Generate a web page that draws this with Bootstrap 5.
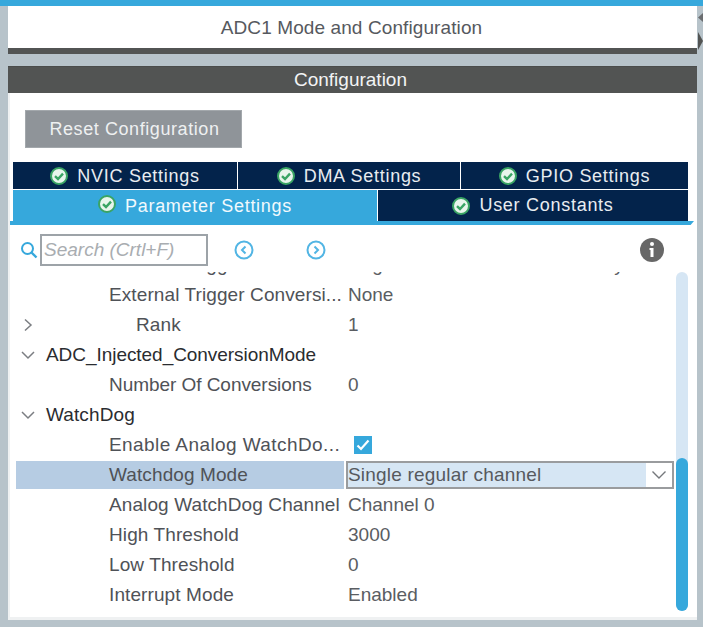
<!DOCTYPE html>
<html lang="en">
<head>
<meta charset="utf-8">
<title>ADC1 Mode and Configuration</title>
<link href="https://cdn.jsdelivr.net/npm/bootstrap@5.3.0/dist/css/bootstrap.min.css" rel="stylesheet">
<style>
html,body{height:100%}
body{background:#b7c3ca;font-family:"Liberation Sans",Arial,sans-serif;font-size:19px;color:#4f5257;overflow:hidden}
.top-strip{height:6px;background:#36a8dc}
.frame{margin-left:8px;width:695px}
.title-row{height:48px}
.title-panel{width:689px;background:#fff;border-bottom:6px solid #525453;color:#56595e;letter-spacing:.1px;padding-top:2px;padding-right:2px}
.handle{width:6px}
.conf-head{width:689px;height:27px;margin-top:12px;background:#525453;color:#f2f4f5;border-top:1px solid #4a4c4b;padding-right:4px}
.conf-body{width:689px;height:527px;background:#fff;border-left:2px solid #eff1f2;border-bottom:3px solid #eff1f2;padding-top:17px}
.reset-btn{width:217px;height:38px;margin-left:15px;background:#8f9499;border:1px solid #a3a8ac;border-radius:0;color:#eef0f1;font-size:18px;letter-spacing:.58px;padding:0 0 0 2px}
.reset-btn:hover{background:#8f9499;color:#eef0f1}
.tabs{margin-left:3px;margin-top:14px;width:675px;gap:1px}
.tab-line{gap:1px}
.tab-line:first-child .tab-item{height:27px;padding-top:1px}
.tab-line:last-child .tab-item{height:31px}
.tab-item{background:#03234b;color:#e9edf1;font-size:18px;letter-spacing:.72px;gap:9px;flex:1 1 0}
.tab-n{flex:0 0 224px}
.tab-d{flex:0 0 222px}
.tab-line .tab-item.is-on{background:#36a8dc;color:#f1f9fd;flex:0 0 364px;height:35px;padding-top:5px}
.tab-rule{height:4px;background:#36a8dc;width:684px;margin-top:-4px;clip-path:polygon(0 0,100% 0,99.5% 100%,0 100%)}
.tool-row{height:47px;padding-left:10px;padding-bottom:2px;padding-top:4px}
.find-box{width:168px;height:32px;border:2px solid #9da3a8;margin-left:2px;border-radius:0;padding:0 2px;font-size:19px;font-style:italic;color:#555;box-shadow:none}
.find-box::placeholder{color:#a9adb1;opacity:1}
.nav-a{margin-left:26px}
.nav-b{margin-left:52px}
.info-dot{margin-left:314px}
.tree-wrap{height:344px;position:relative}
.tree{width:658px;margin-left:6px;height:344px;overflow:hidden;justify-content:flex-end;padding-bottom:6px}
.tree-line{height:30px;flex:0 0 30px;align-items:center;white-space:nowrap}
.cell-a{width:328px;flex:0 0 328px;height:28px;display:flex;align-items:center;overflow:hidden;letter-spacing:.1px}
.cell-b{padding-left:4px;color:#5a5d62;flex:1;height:28px;display:flex;align-items:center}
.chev{width:24px;flex:0 0 24px;margin-right:6px;display:flex;justify-content:center}
.txt-leaf{padding-left:93px}
.txt-rank{padding-left:90px}
.txt-group{color:#2a2c30}
.txt-roomy{letter-spacing:.42px}
.txt-tight{letter-spacing:-.05px}
.is-sel{background:#b6cce3}
.drop{margin-left:2px;flex:1;height:28px;border:2px solid #9a9c9e;background:#fff;display:flex;padding:0;border-radius:0}
.drop-val{flex:1;background:#d6e6f4;padding-left:0;line-height:24px;color:#56595e;letter-spacing:.2px}
.drop-arrow{width:26px;display:flex;align-items:center;justify-content:center}
.tick{width:18px;height:18px;background:#36a8dc;margin-left:6px;display:flex;align-items:center;justify-content:center}
.sbar{position:absolute;left:666px;top:0;width:12px;height:339px;background:#d6e6f4;border-radius:6px}
.sthumb{position:absolute;left:0;bottom:0;width:12px;height:153px;background:#36a8dc;border-radius:6px}
</style>
</head>
<body>
<div class="top-strip"></div>
<div class="frame">
  <div class="d-flex title-row">
    <div class="title-panel d-flex align-items-center justify-content-center">ADC1 Mode and Configuration</div>
    <div class="handle">
      <svg width="6" height="48" viewBox="0 0 6 48"><path d="M6 7 1 11.5 6 16Z" fill="#6a6d70"/><path d="M1 26 6 35 1 44Z" fill="#525453"/></svg>
    </div>
  </div>
  <div class="conf-head d-flex align-items-center justify-content-center">Configuration</div>
  <div class="conf-body">
    <button type="button" class="btn reset-btn">Reset Configuration</button>
    <div class="tabs d-flex flex-column">
      <div class="tab-line d-flex">
        <div class="tab-item tab-n d-flex align-items-center justify-content-center"><svg width="18" height="18" viewBox="0 0 18 18"><circle cx="9" cy="9" r="8" fill="#e8f5ec" stroke="#3aa464" stroke-width="2"/><path d="M5 9.2 8 12l5-5.4" fill="none" stroke="#3aa464" stroke-width="2.4"/></svg><span>NVIC Settings</span></div>
        <div class="tab-item tab-d d-flex align-items-center justify-content-center"><svg width="18" height="18" viewBox="0 0 18 18"><circle cx="9" cy="9" r="8" fill="#e8f5ec" stroke="#3aa464" stroke-width="2"/><path d="M5 9.2 8 12l5-5.4" fill="none" stroke="#3aa464" stroke-width="2.4"/></svg><span>DMA Settings</span></div>
        <div class="tab-item d-flex align-items-center justify-content-center"><svg width="18" height="18" viewBox="0 0 18 18"><circle cx="9" cy="9" r="8" fill="#e8f5ec" stroke="#3aa464" stroke-width="2"/><path d="M5 9.2 8 12l5-5.4" fill="none" stroke="#3aa464" stroke-width="2.4"/></svg><span>GPIO Settings</span></div>
      </div>
      <div class="tab-line d-flex align-items-start">
        <div class="tab-item is-on d-flex justify-content-center align-items-start"><svg width="18" height="18" viewBox="0 0 18 18"><circle cx="9" cy="9" r="8" fill="#e8f5ec" stroke="#3aa464" stroke-width="2"/><path d="M5 9.2 8 12l5-5.4" fill="none" stroke="#3aa464" stroke-width="2.4"/></svg><span class="lh-sm">Parameter Settings</span></div>
        <div class="tab-item d-flex align-items-center justify-content-center"><svg width="18" height="18" viewBox="0 0 18 18"><circle cx="9" cy="9" r="8" fill="#e8f5ec" stroke="#3aa464" stroke-width="2"/><path d="M5 9.2 8 12l5-5.4" fill="none" stroke="#3aa464" stroke-width="2.4"/></svg><span>User Constants</span></div>
      </div>
    </div>
    <div class="tab-rule"></div>
    <div class="tool-row d-flex align-items-center">
      <svg width="18" height="18" viewBox="0 0 18 18" fill="none" stroke="#36a8dc"><circle cx="7.5" cy="7.5" r="5.5" stroke-width="2"/><path d="M11.5 11.5 16.5 16.5" stroke-width="2.4"/></svg>
      <input class="form-control find-box" type="text" placeholder="Search (Crtl+F)" aria-label="Search">
      <svg class="nav-a" width="20" height="20" viewBox="0 0 20 20" fill="none" stroke="#52b5e4" stroke-width="2"><circle cx="10" cy="10" r="8.5"/><path d="M11.5 6.5 8 10l3.5 3.5"/></svg>
      <svg class="nav-b" width="20" height="20" viewBox="0 0 20 20" fill="none" stroke="#52b5e4" stroke-width="2"><circle cx="10" cy="10" r="8.5"/><path d="M8.5 6.5 12 10l-3.5 3.5"/></svg>
      <svg class="info-dot" width="24" height="24" viewBox="0 0 24 24"><circle cx="12" cy="12" r="12" fill="#676767"/><circle cx="12" cy="6" r="2" fill="#fff"/><path d="M9.5 10h4v9h-3v-7h-1z" fill="#fff"/></svg>
    </div>
    <div class="tree-wrap">
      <div class="tree d-flex flex-column">
        <div class="tree-line d-flex"><div class="cell-a txt-leaf">External Trigger Conversi...</div><div class="cell-b">Regular Conversion launched by software</div></div>
        <div class="tree-line d-flex"><div class="cell-a txt-leaf">External Trigger Conversi...</div><div class="cell-b">None</div></div>
        <div class="tree-line d-flex"><div class="cell-a"><span class="chev"><svg width="14" height="14" viewBox="0 0 14 14" fill="none" stroke="#7b7e82" stroke-width="1.5"><path d="M4 1.5 10 7l-6 5.5"/></svg></span><span class="txt-rank">Rank</span></div><div class="cell-b">1</div></div>
        <div class="tree-line d-flex"><div class="cell-a"><span class="chev"><svg width="16" height="14" viewBox="0 0 16 14" fill="none" stroke="#7b7e82" stroke-width="1.5"><path d="M2 4l6 6 6-6"/></svg></span><span class="txt-group txt-tight">ADC_Injected_ConversionMode</span></div><div class="cell-b"></div></div>
        <div class="tree-line d-flex"><div class="cell-a txt-leaf txt-tight">Number Of Conversions</div><div class="cell-b">0</div></div>
        <div class="tree-line d-flex"><div class="cell-a"><span class="chev"><svg width="16" height="14" viewBox="0 0 16 14" fill="none" stroke="#7b7e82" stroke-width="1.5"><path d="M2 4l6 6 6-6"/></svg></span><span class="txt-group">WatchDog</span></div><div class="cell-b"></div></div>
        <div class="tree-line d-flex"><div class="cell-a txt-leaf txt-roomy">Enable Analog WatchDo...</div><div class="cell-b"><span class="tick"><svg width="14" height="12" viewBox="0 0 14 12" fill="none" stroke="#fff" stroke-width="2.2"><path d="M1.5 6.5 5 10l7.5-8.5"/></svg></span></div></div>
        <div class="tree-line d-flex"><div class="cell-a txt-leaf is-sel">Watchdog Mode</div><div class="drop"><span class="drop-val">Single regular channel</span><span class="drop-arrow"><svg width="16" height="10" viewBox="0 0 16 10" fill="none" stroke="#75787c" stroke-width="1.4"><path d="M1.5 1.5 8 8l6.5-6.5"/></svg></span></div></div>
        <div class="tree-line d-flex"><div class="cell-a txt-leaf">Analog WatchDog Channel</div><div class="cell-b">Channel 0</div></div>
        <div class="tree-line d-flex"><div class="cell-a txt-leaf">High Threshold</div><div class="cell-b">3000</div></div>
        <div class="tree-line d-flex"><div class="cell-a txt-leaf">Low Threshold</div><div class="cell-b">0</div></div>
        <div class="tree-line d-flex"><div class="cell-a txt-leaf">Interrupt Mode</div><div class="cell-b">Enabled</div></div>
      </div>
      <div class="sbar"><div class="sthumb"></div></div>
    </div>
  </div>
</div>
<script src="https://cdn.jsdelivr.net/npm/bootstrap@5.3.0/dist/js/bootstrap.bundle.min.js"></script>
</body>
</html>
